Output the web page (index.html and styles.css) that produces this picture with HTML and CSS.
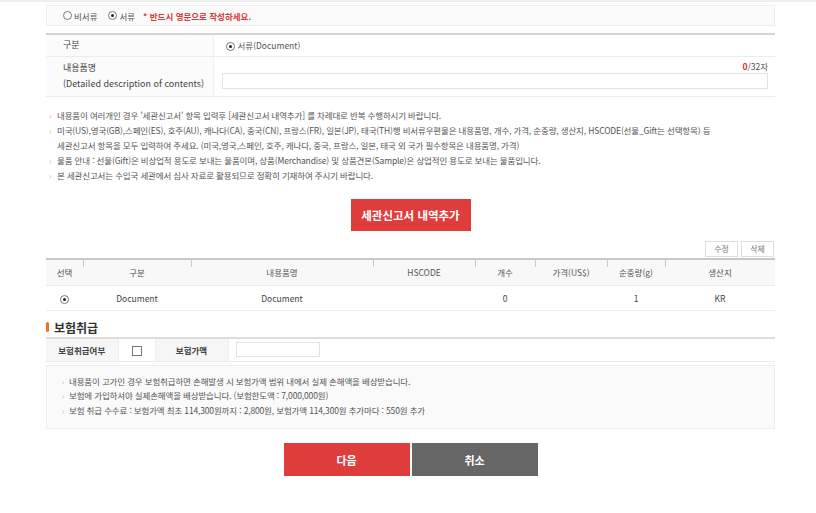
FILE: index.html
```html
<!DOCTYPE html>
<html lang="ko">
<head>
<meta charset="utf-8">
<link rel="stylesheet" href="styles.css">
</head>
<body>
<div class="topline"></div>
<div class="wrap">
  <div class="typebox">
    <span class="radio"></span><span class="rlabel">비서류</span>
    <span class="radio on"></span><span class="rlabel last">서류</span>
    <span class="warn">* 반드시 영문으로 작성하세요.</span>
  </div>

  <table class="form">
    <tr class="r1">
      <th>구분</th>
      <td><span class="radio on"></span><span class="doc">서류(Document)</span></td>
    </tr>
    <tr class="r2">
      <th>내용품명<br>(Detailed description of contents)</th>
      <td>
        <div class="count"><span class="red">0</span>/32자</div>
        <div class="input wide"></div>
      </td>
    </tr>
  </table>

  <ul class="notes">
    <li>내용품이 여러개인 경우 '세관신고서' 항목 입력후 [세관신고서 내역추가] 를 차례대로 반복 수행하시기 바랍니다.</li>
    <li>미국(US),영국(GB),스페인(ES), 호주(AU), 캐나다(CA), 중국(CN), 프랑스(FR), 일본(JP), 태국(TH)행 비서류우편물은 내용품명, 개수, 가격, 순중량, 생산지, HSCODE(선물_Gift는 선택항목) 등<br>세관신고서 항목을 모두 입력하여 주세요. (미국,영국,스페인, 호주, 캐나다, 중국, 프랑스, 일본, 태국 외 국가 필수항목은 내용품명, 가격)</li>
    <li>물품 안내 : 선물(Gift)은 비상업적 용도로 보내는 물품이며, 상품(Merchandise) 및 상품견본(Sample)은 상업적인 용도로 보내는 물품입니다.</li>
    <li>본 세관신고서는 수입국 세관에서 심사 자료로 활용되므로 정확히 기재하여 주시기 바랍니다.</li>
  </ul>

  <div class="addrow"><button class="btn-add">세관신고서 내역추가</button></div>

  <div class="smallbtns"><button class="sbtn">수정</button><button class="sbtn">삭제</button></div>

  <table class="list">
    <colgroup>
      <col style="width:37px"><col style="width:108px"><col style="width:182px"><col style="width:102px">
      <col style="width:60px"><col style="width:72px"><col style="width:58px"><col style="width:110px">
    </colgroup>
    <thead>
      <tr><th class="first">선택</th><th>구분</th><th>내용품명</th><th>HSCODE</th><th>개수</th><th>가격(US$)</th><th>순중량(g)</th><th>생산지</th></tr>
    </thead>
    <tbody>
      <tr><td><span class="radio on"></span></td><td>Document</td><td>Document</td><td></td><td>0</td><td></td><td>1</td><td>KR</td></tr>
    </tbody>
  </table>

  <h3 class="sec"><span class="mark"></span>보험취급</h3>
  <table class="ins">
    <tr>
      <th class="c1">보험취급여부</th>
      <td class="c2"><span class="check"></span></td>
      <th class="c3">보험가액</th>
      <td class="c4"><div class="input small"></div></td>
    </tr>
  </table>
  <ul class="infobox">
    <li>내용품이 고가인 경우 보험취급하면 손해발생 시 보험가액 범위 내에서 실제 손해액을 배상받습니다.</li>
    <li>보험에 가입하셔야 실제손해액을 배상받습니다. (보험한도액 : 7,000,000원)</li>
    <li>보험 취급 수수료 : 보험가액 최초 114,300원까지 : 2,800원, 보험가액 114,300원 추가마다 : 550원 추가</li>
  </ul>

  <div class="actions"><button class="btn-next">다음</button><button class="btn-cancel">취소</button></div>
</div>
</body>
</html>
```

FILE: styles.css
```css
* { box-sizing: border-box; }
body {
  margin: 0;
  background: #fff;
  font-family: "Noto Sans CJK KR", "Noto Sans", sans-serif;
  color: #444;
  font-size: 9px;
}
.topline { height: 2px; background: #eeeeee; }
.wrap { width: 729px; margin-left: 46px; }

.radio {
  display: inline-block;
  width: 9px; height: 9px;
  border: 1px solid #777;
  border-radius: 50%;
  vertical-align: middle;
  position: relative;
  background: #fff;
}
.radio.on::after {
  content: "";
  position: absolute;
  left: 2px; top: 2px;
  width: 3px; height: 3px;
  border-radius: 50%;
  background: #222;
}

.typebox {
  margin-top: 3px;
  height: 21px;
  border: 1px solid #eeeeee;
  background: #fafafa;
  padding-left: 16px;
  display: flex;
  align-items: center;
  font-size: 8.5px;
  color: #555;
}
.rlabel { margin-left: 2px; margin-right: 11px; }
.rlabel.last { margin-right: 8px; }
.warn { color: #d63a3a; font-weight: bold; }

table { border-collapse: collapse; width: 100%; }
.form { margin-top: 7px; border-top: 2px solid #d4d4d4; }
.form th {
  width: 167px;
  text-align: left;
  font-weight: normal;
  padding-left: 17px;
  background: #fbfbfb;
  border-right: 1px solid #f0f0f0;
  color: #444;
  font-size: 9px;
  line-height: 16px;
}
.form tr { border-bottom: 1px solid #ececec; }
.form .r1 { height: 22px; }
.form .r1 td { padding-left: 12px; }
.form .r2 { height: 40px; }
.form .r2 td { padding: 0 7px 0 8px; }
.doc { margin-left: 3px; font-size: 8.5px; color: #555; }
.count { text-align: right; font-size: 8.5px; color: #555; line-height: 12px; margin-top: -3px; }
.red { color: #c43030; font-weight: bold; }
.input { border: 1px solid #e2e2e2; background: #fff; }
.input.wide { height: 16px; margin-top: 1px; }
.input.small { width: 84px; height: 15px; }

.notes {
  list-style: none;
  margin: 11px 0 0;
  padding: 0 0 0 11px;
  font-size: 8.5px;
  line-height: 15px;
  color: #555;
  letter-spacing: -0.15px;
}
.notes li, .infobox li { position: relative; }
.notes li::before, .infobox li::before {
  content: "›";
  position: absolute;
  left: -8px;
  color: #eeae86;
}

.addrow { display: flex; justify-content: center; margin-top: 16px; }
.btn-add {
  width: 120px; height: 32px;
  border: none;
  background: #df3c3c;
  color: #fff;
  font-family: inherit;
  font-size: 11.5px;
  font-weight: bold;
}

.smallbtns { display: flex; justify-content: flex-end; gap: 3px; margin-top: 10px; padding-right: 1px; }
.sbtn {
  width: 33px; height: 16px;
  border: 1px solid #ddd;
  background: #fff;
  color: #777;
  font-family: inherit;
  font-size: 8px;
  padding: 0;
}

.list { margin-top: 1px; border-top: 2px solid #c8c8c8; table-layout: fixed; }
.list th {
  height: 27px;
  font-weight: normal;
  font-size: 8.5px;
  color: #555;
  background: #f8f8f8 linear-gradient(#c8c8c8, #c8c8c8) left top / 1px 7px no-repeat;
  border-bottom: 1px solid #ececec;
}
.list th.first { background: #f8f8f8; }
.list td {
  height: 25px;
  text-align: center;
  font-size: 8.5px;
  color: #444;
  border-bottom: 1px solid #ececec;
}

.sec {
  margin: 8px 0 0;
  height: 16px;
  display: flex;
  align-items: center;
  font-size: 12px;
  font-weight: bold;
  color: #333;
}
.mark {
  width: 3px; height: 10px;
  border-radius: 2px;
  background: #e8741f;
  margin-right: 5px;
}

.ins { margin-top: 2px; border-top: 2px solid #dddddd; border-bottom: 1px solid #ececec; }
.ins tr { height: 23px; }
.ins th {
  font-weight: bold;
  font-size: 8.5px;
  color: #444;
  background: #f6f6f6;
  text-align: center;
}
.ins .c1 { width: 72px; }
.ins .c2 { width: 37px; text-align: center; border-left: 1px solid #eee; border-right: 1px solid #eee; }
.ins .c3 { width: 73px; }
.ins .c4 { padding-left: 7px; border-left: 1px solid #eee; }
.check {
  display: inline-block;
  width: 10px; height: 10px;
  border: 1px solid #777;
  vertical-align: middle;
}

.infobox {
  list-style: none;
  margin: 3px 0 0;
  padding: 8px 0 11px 22px;
  border: 1px solid #eeeeee;
  background: #fafafa;
  font-size: 8.5px;
  line-height: 14.5px;
  color: #555;
  letter-spacing: -0.15px;
}
.infobox li::before { left: -7px; }

.actions { display: flex; justify-content: center; gap: 2px; margin-top: 14px; }
.actions button {
  width: 126px; height: 33px;
  border: none;
  color: #fff;
  font-family: inherit;
  font-size: 11px;
  font-weight: bold;
}
.btn-next { background: #df3c3c; }
.btn-cancel { background: #666666; }
```
